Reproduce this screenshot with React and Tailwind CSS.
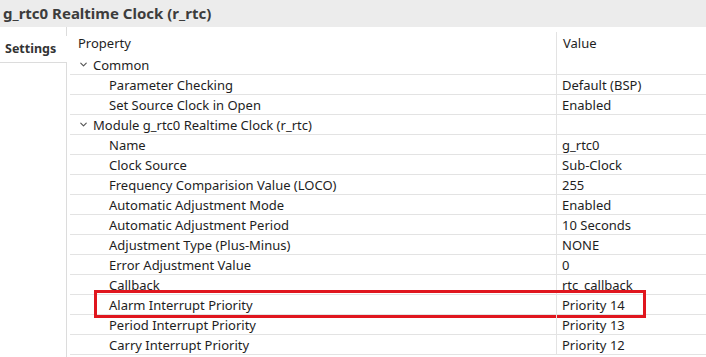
import { ChevronDown } from 'lucide-react';

const rows = [
  { label: 'Common', group: true },
  { label: 'Parameter Checking', value: 'Default (BSP)' },
  { label: 'Set Source Clock in Open', value: 'Enabled' },
  { label: 'Module g_rtc0 Realtime Clock (r_rtc)', group: true },
  { label: 'Name', value: 'g_rtc0' },
  { label: 'Clock Source', value: 'Sub-Clock' },
  { label: 'Frequency Comparision Value (LOCO)', value: '255' },
  { label: 'Automatic Adjustment Mode', value: 'Enabled' },
  { label: 'Automatic Adjustment Period', value: '10 Seconds' },
  { label: 'Adjustment Type (Plus-Minus)', value: 'NONE' },
  { label: 'Error Adjustment Value', value: '0' },
  { label: 'Callback', value: 'rtc_callback' },
  { label: 'Alarm Interrupt Priority', value: 'Priority 14', highlight: true },
  { label: 'Period Interrupt Priority', value: 'Priority 13' },
  { label: 'Carry Interrupt Priority', value: 'Priority 12' },
];

function Row({ row }) {
  return (
    <div className="relative flex h-[20px] border-b border-[#e3e3e3]">
      <div className="flex w-[486px] items-center">
        {row.group ? (
          <>
            <ChevronDown className="ml-[8px] mr-[4px] h-[11px] w-[11px] text-[#555]" strokeWidth={2.5} />
            <span>{row.label}</span>
          </>
        ) : (
          <span className="pl-[39px]">{row.label}</span>
        )}
      </div>
      <div className="flex flex-1 items-center border-l border-[#e3e3e3] pl-[5px]">
        {row.value}
      </div>
      {row.highlight && (
        <div className="absolute left-[24px] top-[-5px] h-[28px] w-[552px] border-[3px] border-[#e0161e]" />
      )}
    </div>
  );
}

export default function App() {
  return (
    <div className="h-[357px] w-[706px] overflow-hidden bg-white text-[13px] text-[#1e1e1e] font-['Noto_Sans',sans-serif]">
      <div className="flex h-[27px] items-center bg-[#ececec] pl-[3px] text-[15px] font-bold text-[#3c3c3c]">
        g_rtc0 Realtime Clock (r_rtc)
      </div>
      <div className="flex">
        <div className="flex w-[67px] flex-col">
          <div className="h-[9px] border-r border-[#dcdcdc]" />
          <div className="flex h-[27px] items-center border-b border-[#dcdcdc] pl-[5px] text-[12.5px] font-bold text-[#333]">
            Settings
          </div>
          <div className="h-[300px] border-r border-[#dcdcdc]" />
        </div>
        <div className="ml-[3px] flex-1 leading-[20px]">
          <div className="flex h-[28px]">
            <div className="w-[486px] pl-[8px] pt-[6px]">Property</div>
            <div className="mt-[5px] flex-1 border-l border-[#e3e3e3] pl-[6px] pt-[1px]">Value</div>
          </div>
          {rows.map((row) => (
            <Row key={row.label} row={row} />
          ))}
        </div>
      </div>
    </div>
  );
}
